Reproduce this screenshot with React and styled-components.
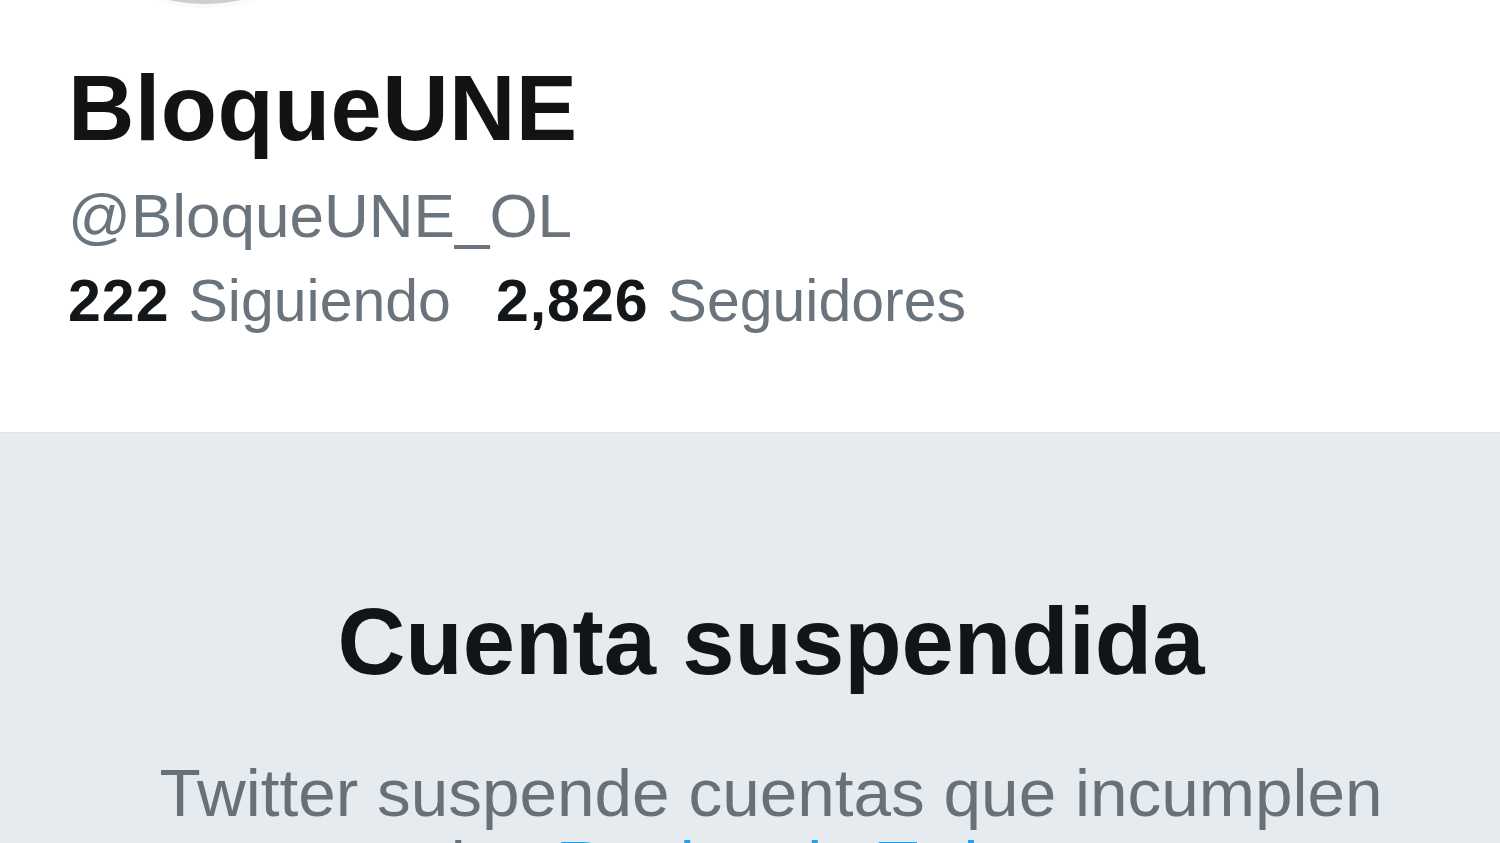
import React from 'react'
import styled, { createGlobalStyle } from 'styled-components'

const GlobalStyle = createGlobalStyle`
  html, body {
    margin: 0;
    padding: 0;
    background: #ffffff;
    font-family: "Liberation Sans", Arial, sans-serif;
    overflow: hidden;
  }
`

const Page = styled.div`
  width: 100%;
  height: 100vh;
  display: flex;
  flex-direction: column;
  overflow: hidden;
`

const Profile = styled.header`
  position: relative;
  flex-shrink: 0;
  height: 432px;
  box-sizing: border-box;
  padding: 62px 0 0 68px;
  background: #ffffff;
`

const Avatar = styled.div`
  position: absolute;
  top: -320px;
  left: 43px;
  width: 324px;
  height: 324px;
  border-radius: 50%;
  background: #c9cfd3;
  box-shadow: 0 0 0 4px #f9fafb;
`

const Name = styled.h1`
  margin: 0;
  font-size: 92px;
  line-height: 1;
  font-weight: 700;
  color: #111315;
  letter-spacing: 0.4px;
`

const Handle = styled.div`
  margin-top: 31px;
  font-size: 62px;
  line-height: 1;
  color: #6b747c;
`

const Stats = styled.div`
  margin-top: 25px;
  display: flex;
  gap: 45px;
  font-size: 59px;
  line-height: 1;
`

const Stat = styled.span`
  color: #6b747c;
  b {
    color: #14171a;
    font-weight: 700;
    margin-right: 19px;
    letter-spacing: 1px;
  }
`

const Suspended = styled.section`
  flex: 1;
  box-sizing: border-box;
  padding: 162px 0 0 42px;
  background: #e6ebef;
  border-top: 1px solid #dfe3e6;
  text-align: center;
`

const Title = styled.h2`
  margin: 0;
  font-size: 94px;
  line-height: 1;
  font-weight: 700;
  color: #121416;
`

const Message = styled.p`
  margin: 68px 0 0;
  font-size: 67.5px;
  line-height: 72px;
  color: #687078;
`

const Link = styled.a`
  color: #1da1f2;
  text-decoration: none;
`

export default function App() {
  return (
    <Page>
      <GlobalStyle />
      <Profile>
        <Avatar />
        <Name>BloqueUNE</Name>
        <Handle>@BloqueUNE_OL</Handle>
        <Stats>
          <Stat><b>222</b>Siguiendo</Stat>
          <Stat><b>2,826</b>Seguidores</Stat>
        </Stats>
      </Profile>
      <Suspended>
        <Title>Cuenta suspendida</Title>
        <Message>
          Twitter suspende cuentas que incumplen<br />
          las <Link href="#">Reglas de Twitter</Link>.
        </Message>
      </Suspended>
    </Page>
  )
}
